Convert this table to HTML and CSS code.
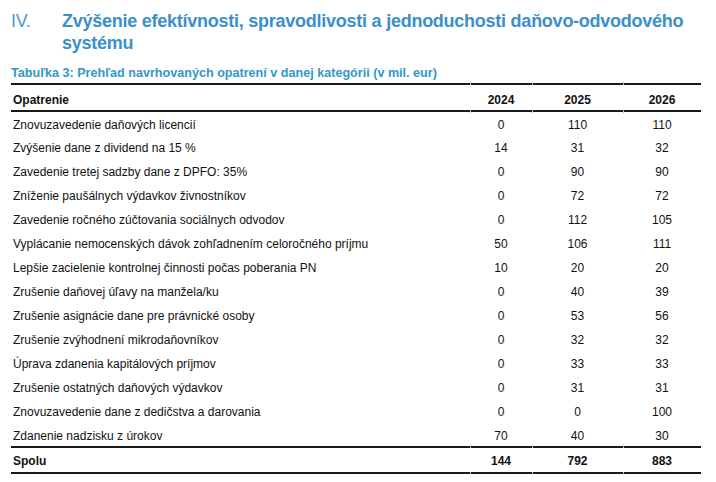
FILE: index.html
```html
<!DOCTYPE html>
<html lang="sk">
<head>
<meta charset="utf-8">
<link rel="stylesheet" href="styles.css">
</head>
<body>
<div class="page">
  <h1 class="heading">
    <span class="num">IV.</span>
    <span class="title">Zvýšenie efektívnosti, spravodlivosti a jednoduchosti daňovo-odvodového systému</span>
  </h1>
  <p class="caption">Tabuľka 3: Prehľad navrhovaných opatrení v danej kategórii (v mil. eur)</p>
  <table class="tbl">
    <colgroup>
      <col class="c-name"><col class="c-a"><col class="c-b"><col class="c-c">
    </colgroup>
    <thead>
      <tr><th class="name">Opatrenie</th><th>2024</th><th>2025</th><th>2026</th></tr>
    </thead>
    <tbody>
      <tr><td class="name">Znovuzavedenie daňových licencií</td><td>0</td><td>110</td><td>110</td></tr>
      <tr><td class="name">Zvýšenie dane z dividend na 15 %</td><td>14</td><td>31</td><td>32</td></tr>
      <tr><td class="name">Zavedenie tretej sadzby dane z DPFO: 35%</td><td>0</td><td>90</td><td>90</td></tr>
      <tr><td class="name">Zníženie paušálnych výdavkov živnostníkov</td><td>0</td><td>72</td><td>72</td></tr>
      <tr><td class="name">Zavedenie ročného zúčtovania sociálnych odvodov</td><td>0</td><td>112</td><td>105</td></tr>
      <tr><td class="name">Vyplácanie nemocenských dávok zohľadnením celoročného príjmu</td><td>50</td><td>106</td><td>111</td></tr>
      <tr><td class="name">Lepšie zacielenie kontrolnej činnosti počas poberania PN</td><td>10</td><td>20</td><td>20</td></tr>
      <tr><td class="name">Zrušenie daňovej úľavy na manžela/ku</td><td>0</td><td>40</td><td>39</td></tr>
      <tr><td class="name">Zrušenie asignácie dane pre právnické osoby</td><td>0</td><td>53</td><td>56</td></tr>
      <tr><td class="name">Zrušenie zvýhodnení mikrodaňovníkov</td><td>0</td><td>32</td><td>32</td></tr>
      <tr><td class="name">Úprava zdanenia kapitálových príjmov</td><td>0</td><td>33</td><td>33</td></tr>
      <tr><td class="name">Zrušenie ostatných daňových výdavkov</td><td>0</td><td>31</td><td>31</td></tr>
      <tr><td class="name">Znovuzavedenie dane z dedičstva a darovania</td><td>0</td><td>0</td><td>100</td></tr>
      <tr><td class="name">Zdanenie nadzisku z úrokov</td><td>70</td><td>40</td><td>30</td></tr>
    </tbody>
    <tfoot>
      <tr><th class="name">Spolu</th><th>144</th><th>792</th><th>883</th></tr>
    </tfoot>
  </table>
</div>
</body>
</html>
```

FILE: styles.css
```css
* { box-sizing: border-box; }
html, body { margin: 0; padding: 0; background: #fff; }
body {
  font-family: "Liberation Sans", Arial, sans-serif;
  color: #111;
}
.page {
  padding: 10px 0 0 11px;
  width: 716px;
}
.heading {
  margin: 0;
  display: flex;
  font-size: 18px;
  letter-spacing: -0.25px;
  line-height: 22px;
  font-weight: bold;
  color: #3b8fcb;
}
.num {
  width: 51px;
  flex: none;
  font-weight: normal;
  color: #4d97d0;
}
.title { flex: 1; }
.caption {
  margin: 11px 0 0 0;
  font-size: 12.6px;
  line-height: 17px;
  font-weight: bold;
  color: #3596c8;
  height: 18px;
}
.tbl {
  width: 690px;
  border-collapse: collapse;
  table-layout: fixed;
  font-size: 12px;
}
.c-name { width: 459px; }
.c-a { width: 62px; }
.c-b { width: 91px; }
.c-c { width: 78px; }
.tbl th, .tbl td {
  padding: 0;
  text-align: center;
  vertical-align: middle;
  white-space: nowrap;
}
.tbl .name { text-align: left; padding-left: 2px; }
.tbl thead th {
  height: 27px;
  font-weight: bold;
  border-top: 2px solid #1a1a1a;
  border-bottom: 2px solid #1a1a1a;
  padding-top: 4px;
  position: relative;
}
.tbl thead th + th::before,
.tbl tfoot th + th::before {
  content: "";
  position: absolute;
  left: 0;
  top: -3px;
  width: 1px;
  height: 3px;
  background: #bbb;
}
.tbl thead th + th::after,
.tbl tfoot th + th::after {
  content: "";
  position: absolute;
  left: 0;
  bottom: -3px;
  width: 1px;
  height: 3px;
  background: #bbb;
}
.tbl tbody td { height: 24px; padding-top: 2px; }
.tbl tfoot th {
  height: 26px;
  font-weight: bold;
  border-top: 2px solid #1a1a1a;
  border-bottom: 2px solid #1a1a1a;
  padding-top: 2px;
  position: relative;
}
```
